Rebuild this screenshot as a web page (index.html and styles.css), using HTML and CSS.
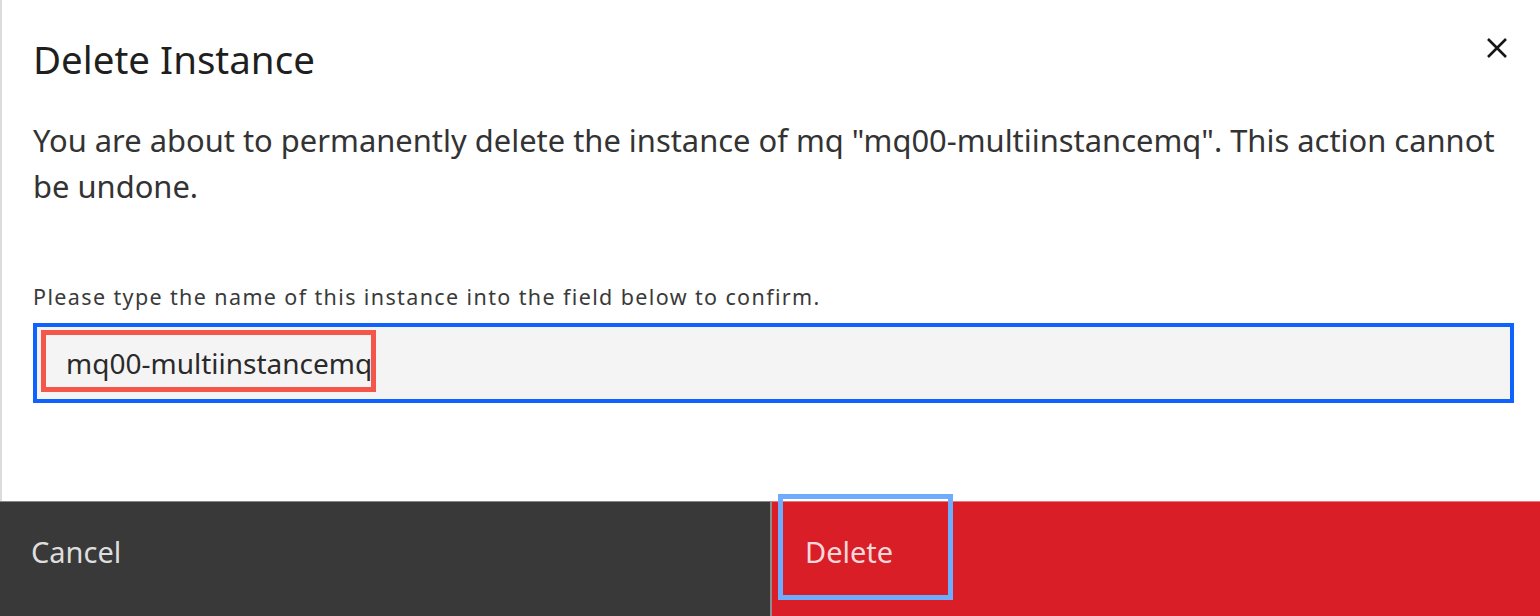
FILE: index.html
```html
<!DOCTYPE html>
<html lang="en">
<head>
<meta charset="utf-8">
<title>Delete Instance</title>
<link rel="stylesheet" href="styles.css">
</head>
<body>
<div class="modal">
  <div class="main">
    <div class="header">
      <h2 class="title">Delete Instance</h2>
      <button class="close" aria-label="Close">
        <svg width="22" height="22" viewBox="0 0 22 22"><path d="M2 2 L20 20 M20 2 L2 20" stroke="#161616" stroke-width="2.6" fill="none"/></svg>
      </button>
    </div>
    <p class="body-text">You are about to permanently delete the instance of mq "mq00-multiinstancemq". This action cannot be undone.</p>
    <label class="label">Please type the name of this instance into the field below to confirm.</label>
    <div class="field">
      <span class="value">mq00-multiinstancemq</span><span class="caret"></span>
      <span class="mark-red"></span>
    </div>
  </div>
  <div class="footer">
    <button class="btn btn-cancel">Cancel</button>
    <button class="btn btn-delete">Delete<span class="mark-blue"></span></button>
  </div>
</div>
</body>
</html>
```
FILE: styles.css
```css
* { box-sizing: border-box; }
html, body { margin: 0; padding: 0; background: #fff; }
body { width: 1540px; height: 616px; overflow: hidden; font-family: "Noto Sans", "Open Sans", sans-serif; }
.modal { display: flex; flex-direction: column; height: 616px; }
.main { flex: 0 0 501px; border-left: 2px solid #dcdcdc; padding: 0 0 0 31px; }
.header { display: flex; justify-content: space-between; align-items: flex-start; padding-top: 31px; }
.title { margin: 0; font-weight: 400; font-size: 38.5px; line-height: 56px; color: #1f1f1f; letter-spacing: 0; }
.close { border: 0; background: none; padding: 0; margin: 6px 32px 0 0; width: 22px; height: 22px; display: flex; }
.body-text { margin: 30px 0 0; width: 1480px; font-size: 30.9px; line-height: 46px; color: #333; }
.label { display: block; margin-top: 74px; font-size: 21.5px; line-height: 28px; color: #3a3a3a; letter-spacing: 1.38px; }
.field { position: relative; margin-top: 12px; width: 1481px; height: 80px; background: #f4f4f4; border: 4px solid #0f62fe; display: flex; align-items: center; padding-left: 29px; }
.value { font-size: 28px; color: #2a2a2a; line-height: 36px; }
.caret { display: inline-block; width: 2px; height: 34px; background: #222; margin-left: 1px; }
.mark-red { position: absolute; left: 4px; top: 3px; width: 335px; height: 62px; border: 5px solid #f4564a; }
.footer { flex: 1; display: flex; }
.btn { border: 0; margin: 0; font-family: inherit; font-size: 29px; line-height: 40px; text-align: left; padding: 30px 0 0 31px; display: flex; align-items: flex-start; border-top: 1px solid rgba(255,255,255,0.4); }
.btn-cancel { width: 772px; background: #393939; color: #dedede; border-right: 2px solid #8d8d8d; }
.btn-delete { flex: 1; background: #da1e28; color: #f7d8da; position: relative; padding-left: 33px; }
.mark-blue { position: absolute; left: 6px; top: -8px; width: 175px; height: 106px; border: 5px solid #6eadfd; }
```
